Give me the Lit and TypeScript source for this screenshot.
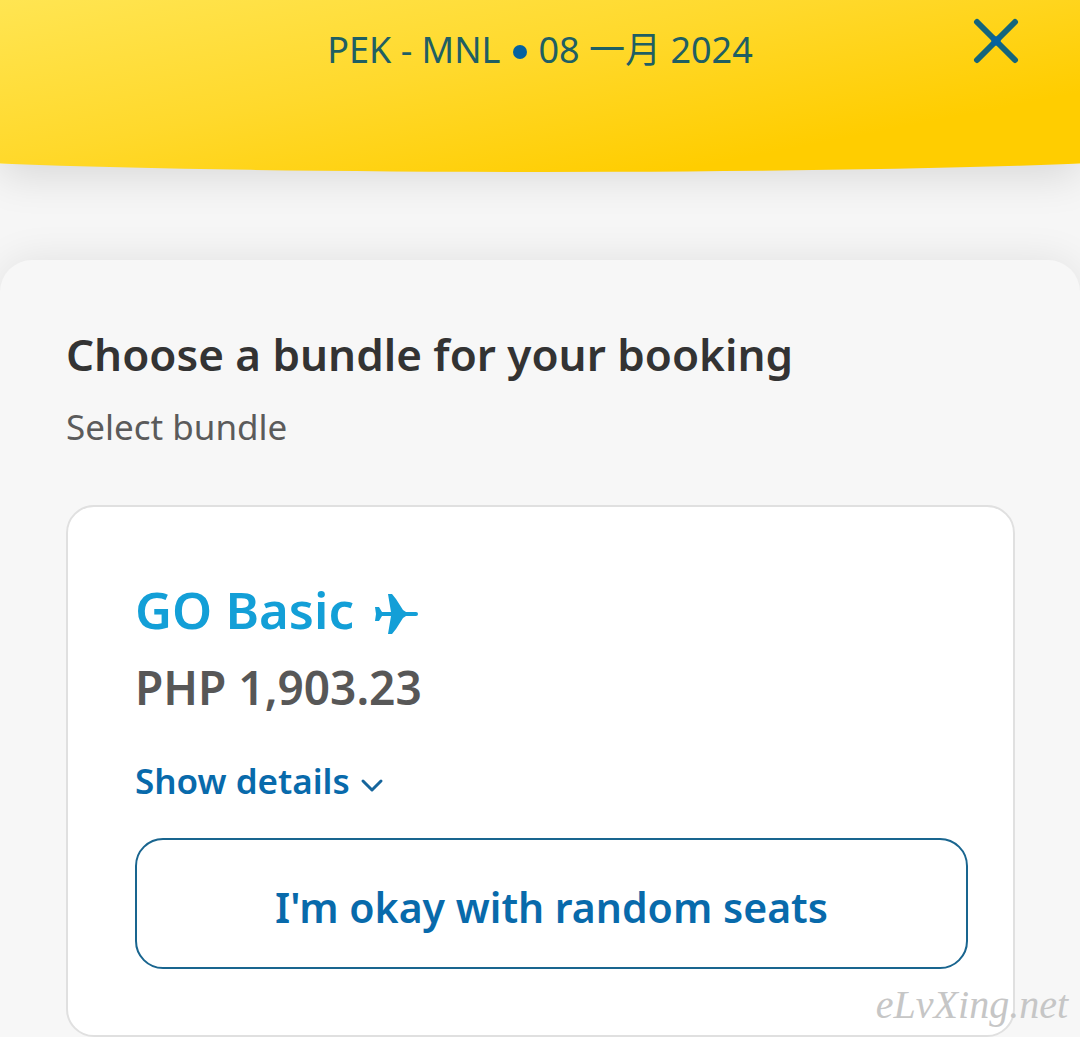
import { LitElement, html, css } from "lit";
import { customElement, property, state } from "lit/decorators.js";

@customElement("trip-header")
class TripHeader extends LitElement {
  @property() route = "";
  @property() date = "";

  static styles = css`
    :host {
      display: block;
      position: relative;
      z-index: 1;
    }
    .bar {
      display: grid;
      grid-template-columns: 1fr auto 1fr;
      align-items: start;
      height: 164px;
      box-sizing: border-box;
      padding: 16px 56px 0;
      position: relative;
      box-shadow: 0 12px 40px rgba(0, 0, 0, 0.12);
    }
    .curve {
      position: absolute;
      inset: 0 0 -12px;
      overflow: hidden;
    }
    .curve::before {
      content: "";
      position: absolute;
      inset: 0 -20% 4px;
      border-radius: 0 0 50% 50% / 0 0 28px 28px;
      background: linear-gradient(169deg, #ffe552 9%, #ffd92c 43%, #ffcd00 74%);
    }
    .trip {
      grid-column: 2;
      position: relative;
      margin: 8px 0 0;
      font-size: 36px;
      line-height: 52px;
      font-weight: 400;
      color: #1f5f63;
      white-space: nowrap;
      display: flex;
      align-items: center;
      gap: 12px;
    }
    .dot {
      width: 14px;
      height: 14px;
      margin-top: 4px;
      border-radius: 50%;
      background: #0562a0;
    }
    .close {
      position: relative;
      justify-self: end;
      display: flex;
      padding: 0;
      border: 0;
      background: none;
      cursor: pointer;
    }
    .close svg {
      width: 56px;
      height: 52px;
    }
  `;

  render() {
    return html`
      <header class="bar">
        <div class="curve"></div>
        <p class="trip"><span>${this.route}</span><span class="dot"></span><span>${this.date}</span></p>
        <button class="close" aria-label="Close">
          <svg viewBox="0 0 56 52" fill="none" stroke="#14657c" stroke-width="6" stroke-linecap="round">
            <path d="M9 6 47 44M47 6 9 44" />
            <path d="M26 23 30 27M30 23 26 27" stroke="#0562a0" />
          </svg>
        </button>
      </header>
    `;
  }
}

@customElement("bundle-card")
class BundleCard extends LitElement {
  @property() name = "";
  @property() price = "";
  @property() action = "";
  @state() open = false;

  static styles = css`
    :host {
      display: block;
    }
    .card {
      box-sizing: border-box;
      padding: 66px 45px 66px 67px;
      border: 2px solid #e0e0e0;
      border-radius: 28px;
      background: #fff;
    }
    .name {
      display: flex;
      align-items: center;
      gap: 20px;
      margin: 0;
      font-size: 51px;
      line-height: 72px;
      font-weight: 600;
      color: #139fd7;
    }
    .plane {
      width: 44px;
      height: 44px;
      margin-top: 8px;
    }
    .price {
      margin: 6px 0 0;
      font-size: 46px;
      line-height: 72px;
      font-weight: 600;
      color: #575757;
    }
    .details {
      display: flex;
      align-items: center;
      gap: 10px;
      margin: 28px 0 27px;
      padding: 0;
      border: 0;
      background: none;
      font: inherit;
      font-size: 35px;
      line-height: 60px;
      font-weight: 600;
      color: #086aab;
      cursor: pointer;
    }
    .chevron {
      width: 24px;
      height: 24px;
      margin-top: 8px;
    }
    .choose {
      display: block;
      width: 100%;
      padding: 36px 16px 28px;
      border: 2px solid #19658f;
      border-radius: 28px;
      background: #fff;
      font: inherit;
      font-size: 41px;
      line-height: 63px;
      font-weight: 600;
      color: #086aab;
      cursor: pointer;
    }
  `;

  render() {
    return html`
      <article class="card">
        <h2 class="name">
          ${this.name}
          <svg class="plane" viewBox="0 0 44 44" fill="#139fd7" aria-hidden="true">
            <path d="M1 16h4l3 5h9L14 3h4l4 5 7 11 3 2h10q2 0 2 2t-2 2H32l-3 2-7 11-4 5h-4l3-18H8l-3 5H1l1-7z" />
          </svg>
        </h2>
        <p class="price">${this.price}</p>
        <button class="details" aria-expanded=${this.open} @click=${() => (this.open = !this.open)}>
          Show details
          <svg class="chevron" viewBox="0 0 24 24" fill="none" stroke="#16659c" stroke-width="3" stroke-linecap="round" stroke-linejoin="round">
            <path d="M3 8 12 17 21 8" />
          </svg>
        </button>
        <button class="choose">${this.action}</button>
      </article>
    `;
  }
}

@customElement("app-root")
class AppRoot extends LitElement {
  static styles = css`
    :host {
      display: block;
      position: relative;
      min-height: 100vh;
      overflow: hidden;
      background: #f6f6f6;
      font-family: "Noto Sans", "Noto Sans CJK SC", sans-serif;
    }
    .panel {
      margin-top: 96px;
      padding: 64px 65px 0 66px;
      border-radius: 32px 32px 0 0;
      background: #f7f7f7;
      box-shadow: 0 0 40px rgba(0, 0, 0, 0.09);
    }
    .title {
      margin: 0;
      font-size: 44px;
      line-height: 60px;
      font-weight: 600;
      color: #333;
    }
    .subtitle {
      margin: 16px 0 51px;
      font-size: 35px;
      line-height: 54px;
      color: #5b5b5b;
    }
    .mark {
      position: absolute;
      right: 12px;
      bottom: 8px;
      font-family: "Liberation Serif", serif;
      font-style: italic;
      font-size: 40px;
      line-height: 48px;
      color: #c6c6c6;
    }
  `;

  render() {
    return html`
      <trip-header route="PEK - MNL" date="08 一月 2024"></trip-header>
      <main class="panel">
        <h1 class="title">Choose a bundle for your booking</h1>
        <p class="subtitle">Select bundle</p>
        <bundle-card name="GO Basic" price="PHP 1,903.23" action="I'm okay with random seats"></bundle-card>
      </main>
      <div class="mark">eLvXing.net</div>
    `;
  }
}
